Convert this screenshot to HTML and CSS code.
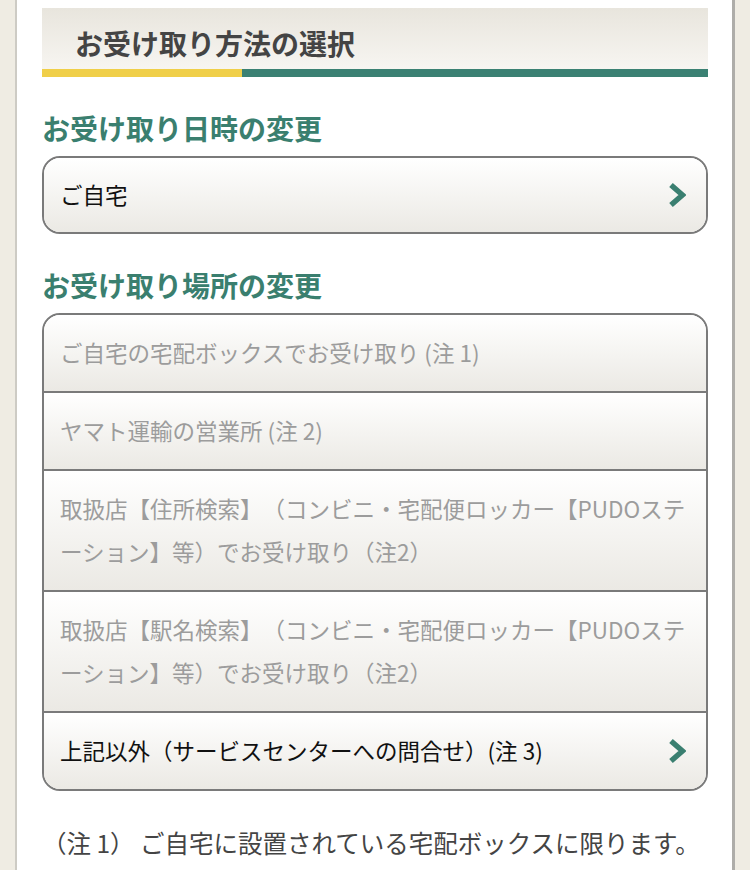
FILE: index.html
```html
<!DOCTYPE html>
<html lang="ja">
<head>
<meta charset="utf-8">
<title>お受け取り方法の選択</title>
<link rel="stylesheet" href="styles.css">
</head>
<body>
<div class="page">
  <div class="title-bar">
    <h1 class="title">お受け取り方法の選択</h1>
  </div>
  <div class="title-stripe"></div>

  <h2 class="section-head">お受け取り日時の変更</h2>
  <div class="box">
    <a class="row row-link" href="#">
      <span class="row-text">ご自宅</span>
      <svg class="chev" viewBox="0 0 18 26" width="18" height="26"><polyline points="3,3 14.5,13 3,23" fill="none" stroke="#3a7f70" stroke-width="5.5" stroke-linejoin="miter"/></svg>
    </a>
  </div>

  <h2 class="section-head">お受け取り場所の変更</h2>
  <div class="box">
    <div class="row row-disabled">ご自宅の宅配ボックスでお受け取り (注 1)</div>
    <div class="row row-disabled">ヤマト運輸の営業所 (注 2)</div>
    <div class="row row-disabled">取扱店【住所検索】（コンビニ・宅配便ロッカー【PUDOステーション】等）でお受け取り（注2）</div>
    <div class="row row-disabled">取扱店【駅名検索】（コンビニ・宅配便ロッカー【PUDOステーション】等）でお受け取り（注2）</div>
    <a class="row row-link" href="#">
      <span class="row-text">上記以外（サービスセンターへの問合せ）(注 3)</span>
      <svg class="chev" viewBox="0 0 18 26" width="18" height="26"><polyline points="3,3 14.5,13 3,23" fill="none" stroke="#3a7f70" stroke-width="5.5" stroke-linejoin="miter"/></svg>
    </a>
  </div>

  <p class="note">（注 1） ご自宅に設置されている宅配ボックスに限ります。</p>
</div>
</body>
</html>
```

FILE: styles.css
```css
html, body {
  margin: 0;
  padding: 0;
}
body {
  background: #efece3;
  font-family: "Noto Sans CJK JP", "Noto Sans", sans-serif;
  color: #222;
  text-spacing-trim: space-all;
}
.page {
  margin: 0 15px;
  min-height: 870px;
  background: #fff;
  border-left: 2px solid #cdcbc4;
  border-right: 3px solid #aeada9;
  padding: 8px 24px 0 25px;
  box-sizing: border-box;
}
.title-bar {
  height: 61px;
  box-sizing: border-box;
  padding: 9px 33px 0;
  display: flex;
  align-items: center;
  background: linear-gradient(to bottom, #e8e5dd 0%, #f7f5f1 100%);
}
.title {
  margin: 0;
  font-size: 28px;
  font-weight: 700;
  line-height: 40px;
  color: #444;
}
.title-stripe {
  height: 8px;
  background: linear-gradient(to right, #f0cf49 0, #f0cf49 200px, #3b8173 200px, #3b8173 100%);
}
.section-head {
  margin: 31px 0 8px;
  font-size: 28px;
  font-weight: 700;
  line-height: 40px;
  color: #3a7f6f;
}
.box {
  border: 2px solid #7a7a7a;
  border-radius: 18px;
  overflow: hidden;
}
.row {
  display: block;
  padding: 16px 20px 17px 16px;
  font-size: 22.5px;
  line-height: 43px;
  line-break: loose;
  background: linear-gradient(to bottom, #ffffff 0%, #f4f3f0 55%, #ebe9e4 100%);
  border-bottom: 2px solid #7a7a7a;
  text-decoration: none;
  color: #111;
}
.row:last-child {
  border-bottom: 0;
}
.row-disabled {
  color: #9c9c9c;
}
.row-link {
  display: flex;
  align-items: center;
  justify-content: space-between;
}
.box > .row-link:only-child {
  padding-top: 15px;
  padding-bottom: 16px;
}
.chev {
  flex: none;
  display: block;
}
.note {
  margin: 30px 0 0;
  padding-left: 0;
  font-size: 24.5px;
  line-height: 43px;
  color: #444;
}
```
